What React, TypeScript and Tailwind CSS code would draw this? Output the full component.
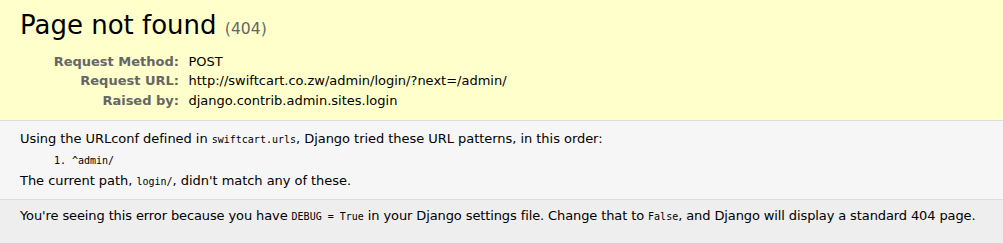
export default function App() {
  const mono = "font-['DejaVu_Sans_Mono',monospace] text-[10px] tracking-normal";
  const th = "w-[165.5px] text-right align-top text-[#666] font-bold pl-[3px] pr-[6.5px] py-[2px]";
  const td = "align-top px-[3px] py-[2px]";
  return (
    <div className="min-h-[243px] bg-[#eee] text-black font-['DejaVu_Sans',Verdana,sans-serif] text-[13px] leading-[15.5px]">
      <div className="bg-[#ffc] px-5 py-2.5 border-b border-[#ddd]">
        <h1 className="text-[26px] font-normal mb-[10.7px] leading-[31px]">
          Page not found <span className="text-[15.6px] leading-[normal] text-[#666]">(404)</span>
        </h1>
        <table className="w-full border-collapse">
          <tbody>
            <tr>
              <th className={th}>Request Method:</th>
              <td className={td}>POST</td>
            </tr>
            <tr>
              <th className={th}>Request URL:</th>
              <td className={td}>http://swiftcart.co.zw/admin/login/?next=/admin/</td>
            </tr>
            <tr>
              <th className={th}>Raised by:</th>
              <td className={td}>django.contrib.admin.sites.login</td>
            </tr>
          </tbody>
        </table>
      </div>
      <div className="bg-[#f6f6f6] px-5 py-2.5 border-b border-[#ddd] tracking-[-0.04px]">
        <p>
          Using the URLconf defined in <code className={mono}>swiftcart.urls</code>, Django tried these URL patterns, in this order:
        </p>
        <ol className="list-decimal mx-[52px] mt-[7.5px] mb-[6.5px]">
          <li className={mono + " leading-[normal]"}>^admin/</li>
        </ol>
        <p>
          The current path, <code className={mono}>login/</code>, didn't match any of these.
        </p>
      </div>
      <div className="bg-[#eee] px-5 pt-2 pb-2.5 tracking-[-0.11px]">
        <p className="whitespace-nowrap">
          You're seeing this error because you have <code className={mono}>DEBUG = True</code> in your Django settings file. Change that to <code className={mono}>False</code>, and Django will display a standard 404 page.
        </p>
      </div>
    </div>
  );
}
